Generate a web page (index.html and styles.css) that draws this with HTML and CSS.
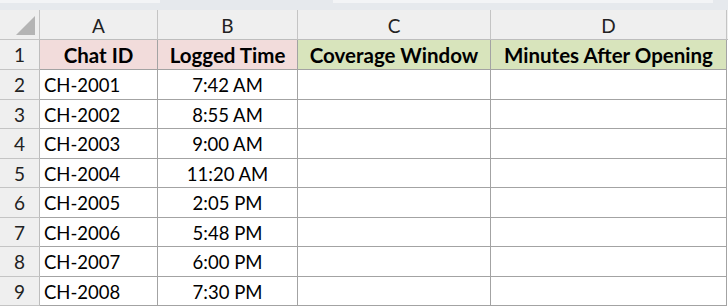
FILE: index.html
```html
<!DOCTYPE html>
<html>
<head>
<meta charset="utf-8">
<link rel="stylesheet" href="styles.css">
</head>
<body>
<div class="band"><div class="band-box left"></div><div class="band-box right"></div></div>
<div class="sheet">
  <div class="corner"><span class="tri"></span></div>
  <div class="colhdr">A</div>
  <div class="colhdr">B</div>
  <div class="colhdr">C</div>
  <div class="colhdr">D</div>
  <div class="colhdr edge"></div>

  <div class="rowhdr">1</div>
  <div class="cell head pink">Chat ID</div>
  <div class="cell head pink">Logged Time</div>
  <div class="cell head green">Coverage Window</div>
  <div class="cell head green">Minutes After Opening</div>
  <div class="cell edge"></div>

  <div class="rowhdr">2</div><div class="cell">CH-2001</div><div class="cell c">7:42 AM</div><div class="cell"></div><div class="cell"></div><div class="cell edge"></div>
  <div class="rowhdr">3</div><div class="cell">CH-2002</div><div class="cell c">8:55 AM</div><div class="cell"></div><div class="cell"></div><div class="cell edge"></div>
  <div class="rowhdr">4</div><div class="cell">CH-2003</div><div class="cell c">9:00 AM</div><div class="cell"></div><div class="cell"></div><div class="cell edge"></div>
  <div class="rowhdr">5</div><div class="cell">CH-2004</div><div class="cell c">11:20 AM</div><div class="cell"></div><div class="cell"></div><div class="cell edge"></div>
  <div class="rowhdr">6</div><div class="cell">CH-2005</div><div class="cell c">2:05 PM</div><div class="cell"></div><div class="cell"></div><div class="cell edge"></div>
  <div class="rowhdr">7</div><div class="cell">CH-2006</div><div class="cell c">5:48 PM</div><div class="cell"></div><div class="cell"></div><div class="cell edge"></div>
  <div class="rowhdr">8</div><div class="cell">CH-2007</div><div class="cell c">6:00 PM</div><div class="cell"></div><div class="cell"></div><div class="cell edge"></div>
  <div class="rowhdr">9</div><div class="cell">CH-2008</div><div class="cell c">7:30 PM</div><div class="cell"></div><div class="cell"></div><div class="cell edge"></div>
</div>
</body>
</html>
```
FILE: styles.css
```css
html, body { margin: 0; padding: 0; background: #ffffff; }
body { width: 728px; height: 307px; overflow: hidden; font-family: Lato, "Noto Sans", sans-serif; color: #000; }

.band { height: 10px; background: #e6e9ed; display: flex; gap: 0; }
.band-box { height: 3px; background: #f3f4f6; }
.band-box.left { width: 160px; }
.band-box.right { width: 380px; margin-left: 173px; }

.sheet {
  display: grid;
  grid-template-columns: 40px 118px 140px 193px 236px 1fr;
  grid-template-rows: 30px 30px 30px 29px 30px 29px 30px 29px 30px 29px;
}

.corner, .colhdr, .rowhdr { background: #efefef; box-sizing: border-box; }
.corner { position: relative; border-right: 1px solid #c4c4c4; border-bottom: 1px solid #c4c4c4; }
.tri {
  position: absolute; right: 4px; bottom: 4px; width: 0; height: 0;
  border-left: 19px solid transparent; border-bottom: 19px solid #b4b4b4;
}
.colhdr {
  border-right: 1px solid #c4c4c4; border-bottom: 1px solid #bdbdbd;
  display: flex; align-items: center; justify-content: center;
  font-size: 19px; color: #222; padding-top: 1px;
}
.colhdr.edge { border-right: none; }
.rowhdr {
  border-right: 1px solid #bdbdbd; border-bottom: 1px solid #c4c4c4;
  display: flex; align-items: center; justify-content: center;
  font-size: 19px; color: #222;
}

.cell {
  box-sizing: border-box;
  border-right: 1px solid #a3a3a3; border-bottom: 1px solid #a3a3a3;
  display: flex; align-items: center; padding: 1px 0 0 4px;
  font-size: 18.5px; white-space: nowrap; overflow: hidden;
}
.cell.c { justify-content: center; padding-left: 0; }
.cell.head { font-weight: 700; font-size: 20.5px; justify-content: center; padding-left: 0; }
.cell.edge { border-right: none; border-bottom: none; }
.pink { background: #f2dcdb; }
.green { background: #d8e4bc; }
```
